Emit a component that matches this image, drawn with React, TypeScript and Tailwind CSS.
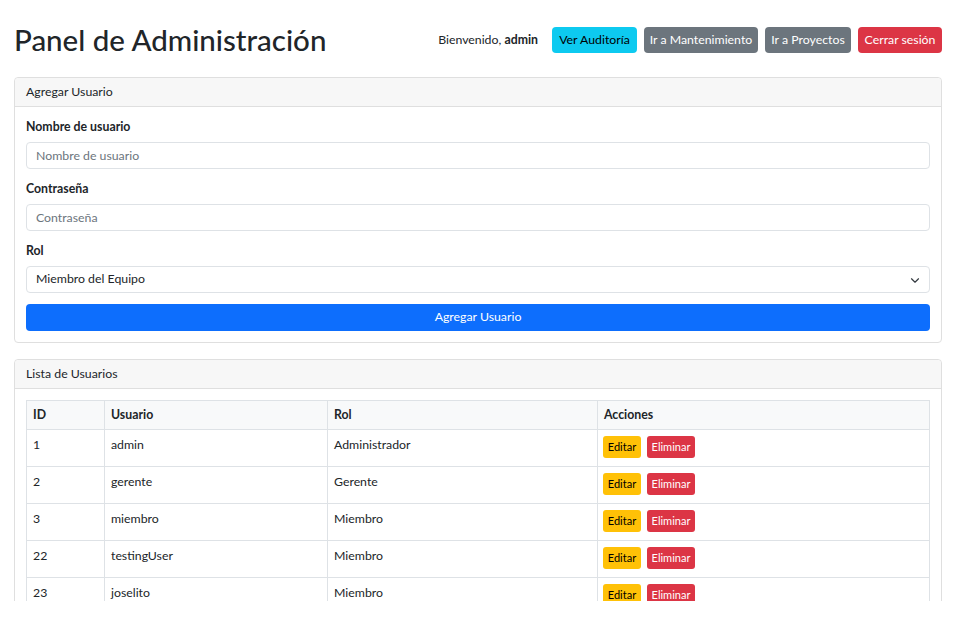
const users = [
  { id: 1, username: 'admin', role: 'Administrador' },
  { id: 2, username: 'gerente', role: 'Gerente' },
  { id: 3, username: 'miembro', role: 'Miembro' },
  { id: 22, username: 'testingUser', role: 'Miembro' },
  { id: 23, username: 'joselito', role: 'Miembro' },
];

const font = { fontFamily: 'Lato, "Noto Sans", sans-serif' };

const Field = ({ label, placeholder }: { label: string; placeholder: string }) => (
  <div className="mb-[11px]">
    <label className="block font-bold leading-[17px] mb-[7px]">{label}</label>
    <input
      type="text"
      placeholder={placeholder}
      className="block w-full h-[27px] px-[9px] border border-[#dee2e6] rounded-[4px] bg-white text-[#212529] placeholder:text-[#6c757d] outline-none"
    />
  </div>
);

const App = () => {
  return (
    <div className="h-[601px] overflow-hidden bg-white text-[#212529] text-[12.3px]" style={font}>
      <div className="pl-[14px] pr-[21px]">
        {/* Header */}
        <div className="flex items-center justify-between h-[40px] mt-[20px] mb-[17px]">
          <h1 className="text-[29.5px] font-medium leading-[34px]">Panel de Administración</h1>
          <div className="flex items-center">
            <span className="mr-[14px]">
              Bienvenido, <b>admin</b>
            </span>
            <div className="flex gap-[7px]">
              <button className="h-[26px] w-[85px] rounded-[4px] bg-[#0dcaf0] text-black">Ver Auditoría</button>
              <button className="h-[26px] w-[114px] rounded-[4px] bg-[#6c757d] text-white">Ir a Mantenimiento</button>
              <button className="h-[26px] w-[86px] rounded-[4px] bg-[#6c757d] text-white">Ir a Proyectos</button>
              <button className="h-[26px] w-[84px] rounded-[4px] bg-[#dc3545] text-white">Cerrar sesión</button>
            </div>
          </div>
        </div>

        {/* Agregar usuario */}
        <div className="border border-[#dfdfdf] rounded-[4px] mb-[16px]">
          <div className="h-[29px] flex items-center px-[11px] bg-[#f7f7f7] border-b border-[#dfdfdf] rounded-t-[4px]">
            Agregar Usuario
          </div>
          <div className="p-[11px]">
            <Field label="Nombre de usuario" placeholder="Nombre de usuario" />
            <Field label="Contraseña" placeholder="Contraseña" />
            <div className="mb-[11px]">
              <label className="block font-bold leading-[17px] mb-[7px]">Rol</label>
              <div className="relative h-[27px] border border-[#dee2e6] rounded-[4px] flex items-center px-[9px]">
                <span>Miembro del Equipo</span>
                <svg className="absolute right-[9px] top-[10px]" width="10" height="7" viewBox="0 0 16 12">
                  <path d="M2 3l6 6 6-6" fill="none" stroke="#343a40" strokeWidth="2" strokeLinecap="round" strokeLinejoin="round" />
                </svg>
              </div>
            </div>
            <button className="w-full h-[27px] rounded-[4px] bg-[#0d6efd] text-white">Agregar Usuario</button>
          </div>
        </div>

        {/* Lista de usuarios */}
        <div className="border border-[#dfdfdf] rounded-[4px]">
          <div className="h-[29px] flex items-center px-[11px] bg-[#f7f7f7] border-b border-[#dfdfdf] rounded-t-[4px]">
            Lista de Usuarios
          </div>
          <div className="p-[11px]">
            <table className="w-full border-collapse border border-[#dee2e6]">
              <thead>
                <tr className="bg-[#f8f9fa] h-[29px]">
                  <th className="w-[78px] text-left font-bold px-[6px] border border-[#dee2e6]">ID</th>
                  <th className="w-[223px] text-left font-bold px-[6px] border border-[#dee2e6]">Usuario</th>
                  <th className="w-[270px] text-left font-bold px-[6px] border border-[#dee2e6]">Rol</th>
                  <th className="text-left font-bold px-[6px] border border-[#dee2e6]">Acciones</th>
                </tr>
              </thead>
              <tbody>
                {users.map((u) => (
                  <tr key={u.id} className="h-[37px]">
                    <td className="align-top px-[6px] pt-[6px] leading-[17px] border border-[#dee2e6]">{u.id}</td>
                    <td className="align-top px-[6px] pt-[6px] leading-[17px] border border-[#dee2e6]">{u.username}</td>
                    <td className="align-top px-[6px] pt-[6px] leading-[17px] border border-[#dee2e6]">{u.role}</td>
                    <td className="align-top px-[5px] pt-[6px] border border-[#dee2e6]">
                      <div className="flex gap-[6px]">
                        <button className="h-[22px] w-[38px] rounded-[3px] bg-[#ffc107] text-black text-[11px]">Editar</button>
                        <button className="h-[22px] w-[48px] rounded-[3px] bg-[#dc3545] text-white text-[11px]">Eliminar</button>
                      </div>
                    </td>
                  </tr>
                ))}
              </tbody>
            </table>
          </div>
        </div>
      </div>
    </div>
  );
};

export default App;
